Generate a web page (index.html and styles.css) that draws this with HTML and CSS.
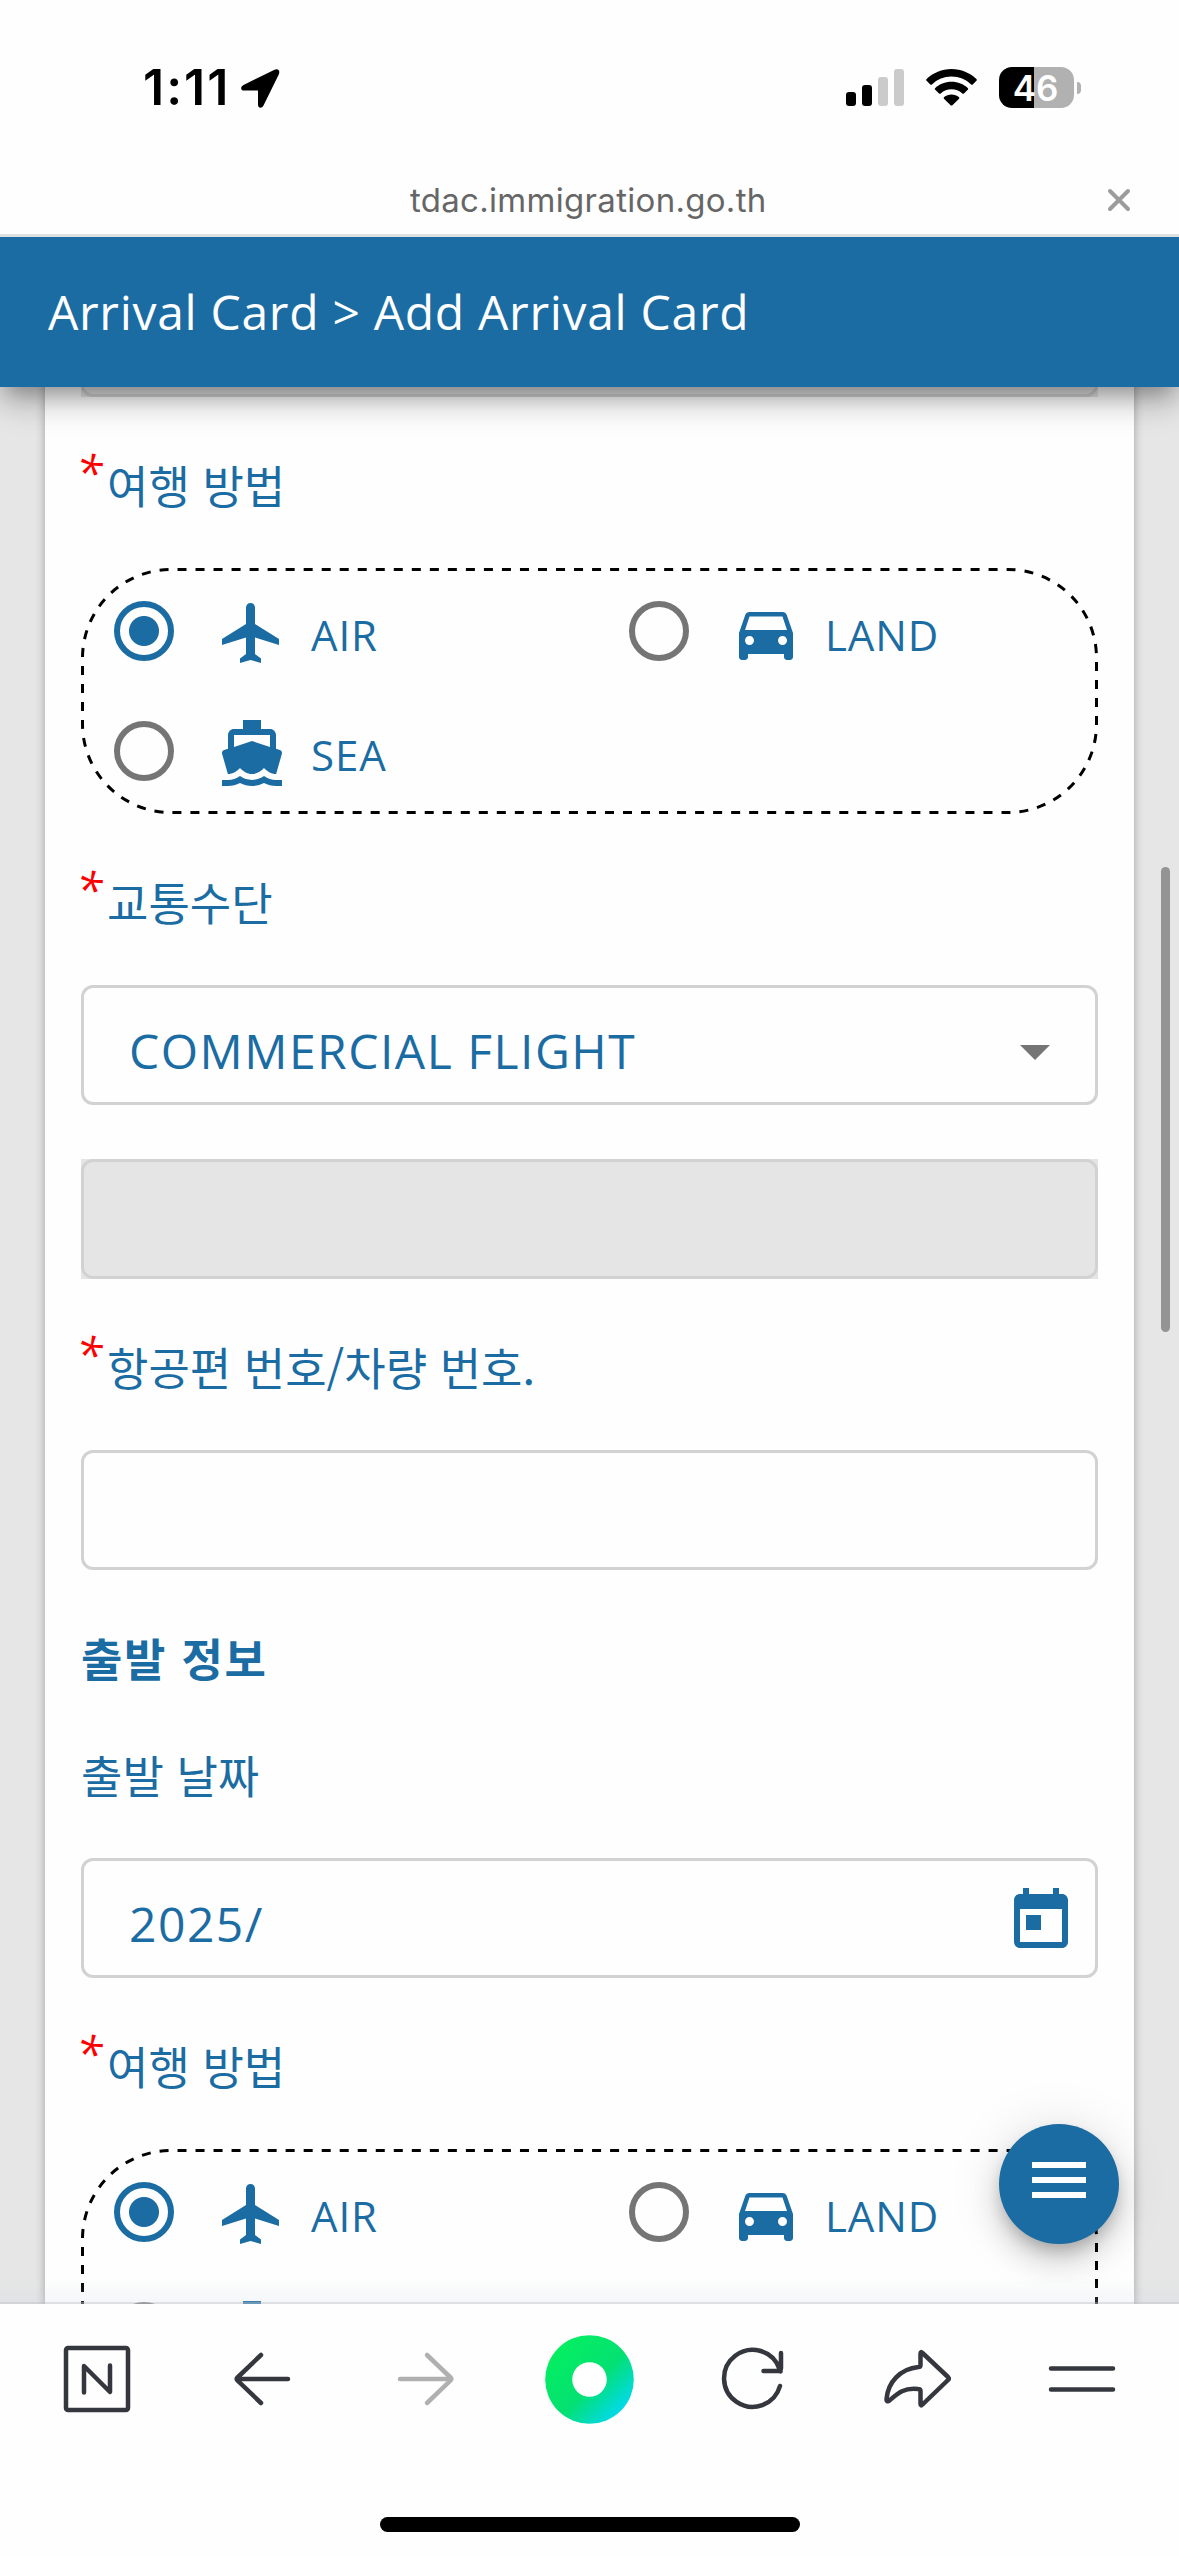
FILE: index.html
```html
<!DOCTYPE html>
<html lang="ko">
<head>
<meta charset="utf-8">
<meta name="viewport" content="width=device-width, initial-scale=1">
<title>Arrival Card</title>
<link rel="stylesheet" href="styles.css">
</head>
<body>
<svg class="defs" width="0" height="0" aria-hidden="true">
  <symbol id="plane" viewBox="0 0 24 24"><path d="M21 16v-2l-8-5V3.500c0-.83-.67-1.500-1.500-1.500S10 2.670 10 3.500V9l-8 5v2l8-2.500V19l-2 1.500V22l3.500-1 3.500 1v-1.500L13 19v-5.500l8 2.500z"/></symbol>
  <symbol id="car" viewBox="0 0 24 24"><path d="M18.920 6.010C18.720 5.420 18.160 5 17.500 5h-11c-.66 0-1.210.42-1.420 1.010L3 12v8c0 .55.45 1 1 1h1c.55 0 1-.45 1-1v-1h12v1c0 .55.45 1 1 1h1c.55 0 1-.45 1-1v-8l-2.080-5.990zM6.500 16c-.83 0-1.500-.67-1.500-1.500S5.670 13 6.500 13s1.500.67 1.500 1.500S7.330 16 6.500 16zm11 0c-.83 0-1.500-.67-1.500-1.500s.67-1.500 1.500-1.500 1.500.67 1.500 1.500-.67 1.500-1.500 1.500zM5 11l1.500-4.500h11L19 11H5z"/></symbol>
  <symbol id="boat" viewBox="0 0 24 24"><path d="M20 21c-1.390 0-2.780-.47-4-1.320-2.440 1.710-5.560 1.710-8 0C6.780 20.530 5.390 21 4 21H2v2h2c1.380 0 2.740-.35 4-.99 2.520 1.290 5.480 1.290 8 0 1.260.65 2.620.99 4 .99h2v-2h-2zM3.950 19H4c1.600 0 3.020-.88 4-2 .98 1.120 2.400 2 4 2s3.020-.88 4-2c.98 1.120 2.400 2 4 2h.05l1.890-6.680c.08-.26.06-.54-.06-.78s-.34-.42-.6-.5L20 10.620V6c0-1.100-.9-2-2-2h-3V1H9v3H6c-1.100 0-2 .9-2 2v4.620l-1.290.42c-.26.08-.48.26-.6.5s-.15.52-.06.78L3.950 19zM6 6h12v3.970L12 8 6 9.970V6z"/></symbol>
  <symbol id="today" viewBox="0 0 24 24"><path d="M19 3h-1V1h-2v2H8V1H6v2H5c-1.110 0-1.990.9-1.990 2L3 19c0 1.100.89 2 2 2h14c1.100 0 2-.9 2-2V5c0-1.100-.9-2-2-2zm0 16H5V8h14v11zM7 10h5v5H7z"/></symbol>
  <symbol id="dashes" viewBox="0 0 1017 246"><path fill="none" stroke="#000" stroke-width="3" stroke-dasharray="9 9" d="M96.500 1.500H927A88.500 88.500 0 0 1 1015.500 90V156A88.500 88.500 0 0 1 927 244.500H90A88.500 88.500 0 0 1 1.500 156V90A88.500 88.500 0 0 1 90 1.500H96.500" pathLength="2358"/></symbol>
</svg>

<header class="status">
  <div class="status-left">
    <span class="time">1:11</span>
    <svg class="location" viewBox="0 0 39 39"><path d="M37.500 1C36.500 0 34.500.3 33 1L2.500 16C-.8 17.700-.5 21.500 3 21.500H17V35.500C17 39.500 20.800 39.800 22.500 36.500L37.500 6C38.500 4 38.700 2.200 37.500 1z"/></svg>
  </div>
  <div class="status-right">
    <svg class="signal" viewBox="0 0 58 37"><rect y="23" width="10" height="14" rx="3"/><rect x="16" y="16" width="10" height="21" rx="3"/><g fill="#cbcbcb"><rect x="32" y="8" width="10" height="29" rx="3"/><rect x="48" width="10" height="37" rx="3"/></g></svg>
    <svg class="wifi" viewBox="0 0 51 37"><path d="M25.500 0C15.800 0 7 3.800.6 10.100a1.200 1.200 0 0 0 0 1.700l3.600 3.600c.5.500 1.200.5 1.700 0A28 28 0 0 1 25.500 7.500c7.600 0 14.500 3 19.600 7.900.5.500 1.200.5 1.700 0l3.600-3.600a1.200 1.200 0 0 0 0-1.700C44 3.800 35.200 0 25.500 0zM25.500 12.800c-6.400 0-12.200 2.400-16.200 6.200a1.200 1.200 0 0 0 0 1.800l3.700 3.600c.5.500 1.200.5 1.700 0a16.300 16.300 0 0 1 21.600 0c.5.500 1.200.5 1.700 0l3.700-3.600a1.200 1.200 0 0 0 0-1.800c-4-3.800-9.800-6.200-16.200-6.200zM25.500 25.500c-2.800 0-5.400 1-7.300 2.600a1.200 1.200 0 0 0 0 1.800l6.400 6.300c.5.500 1.300.5 1.800 0l6.400-6.300a1.200 1.200 0 0 0 0-1.800c-1.900-1.600-4.500-2.600-7.300-2.600z"/></svg>
    <div class="battery"><span>46</span></div>
    <i class="nub"></i>
  </div>
</header>

<div class="address">
  <span class="url">tdac.immigration.go.th</span>
  <svg class="close" viewBox="0 0 24 24"><path d="M3 3L21 21M21 3L3 21"/></svg>
</div>

<div class="appbar"><span>Arrival Card &gt; Add Arrival Card</span></div>

<main class="viewport">
  <section class="card">
    <div class="field disabled first"><div class="outline"></div></div>

    <div class="label"><b class="req">*</b>여행 방법</div>
    <div class="modes">
      <svg class="frame"><use href="#dashes"/></svg>
      <div class="mode"><i class="radio on"></i><svg class="icon"><use href="#plane"/></svg><span>AIR</span></div>
      <div class="mode"><i class="radio"></i><svg class="icon"><use href="#car"/></svg><span>LAND</span></div>
      <div class="mode"><i class="radio"></i><svg class="icon"><use href="#boat"/></svg><span>SEA</span></div>
    </div>

    <div class="label"><b class="req">*</b>교통수단</div>
    <div class="field"><span>COMMERCIAL FLIGHT</span><i class="caret"></i></div>
    <div class="field disabled spaced"><div class="outline"></div></div>

    <div class="label"><b class="req">*</b>항공편 번호/차량 번호.</div>
    <div class="field"></div>

    <h2 class="heading">출발 정보</h2>
    <div class="label">출발 날짜</div>
    <div class="field"><span>2025/</span><svg class="icon today"><use href="#today"/></svg></div>

    <div class="label"><b class="req">*</b>여행 방법</div>
    <div class="modes">
      <svg class="frame"><use href="#dashes"/></svg>
      <div class="mode"><i class="radio on"></i><svg class="icon"><use href="#plane"/></svg><span>AIR</span></div>
      <div class="mode"><i class="radio"></i><svg class="icon"><use href="#car"/></svg><span>LAND</span></div>
      <div class="mode"><i class="radio"></i><svg class="icon"><use href="#boat"/></svg></div>
    </div>
  </section>
  <i class="scrollbar"></i>
  <div class="fab"><svg viewBox="0 0 54 36"><path d="M0 0H54V6H0zM0 15H54V21H0zM0 30H54V36H0z"/></svg></div>
</main>

<nav class="toolbar">
  <div class="tools">
    <svg viewBox="0 0 90 90"><rect x="14" y="14" width="62" height="62" rx="2"/><path d="M32 58.500V32L58 58V31.500"/></svg>
    <svg viewBox="0 0 90 90"><path d="M72 45H21M45 21L21.500 43.500Q20 45 21.500 46.500L45 69"/></svg>
    <svg class="dim" viewBox="0 0 90 90"><path d="M20 45H71M47 21L70.500 43.500Q72 45 70.500 46.500L47 69"/></svg>
    <svg class="home" viewBox="0 0 90 90"><defs><linearGradient id="g" x1=".1" y1=".1" x2=".87" y2=".87"><stop offset="0" stop-color="#04f05f"/><stop offset=".58" stop-color="#04e072"/><stop offset="1" stop-color="#00d9f0"/></linearGradient></defs><circle cx="45.500" cy="45.500" r="44.300" fill="url(#g)"/><circle cx="45.500" cy="45.500" r="17.300" fill="#fff"/></svg>
    <svg viewBox="0 0 90 90"><path d="M71 52A28.500 28.500 0 1 1 70.500 35L71.500 37.500M72 19V34Q72 37 69 37H54.500"/></svg>
    <svg viewBox="0 0 90 90"><path d="M47.500 19.500Q47.500 17 49.500 19L75 43Q76.500 44.500 75 46L49.500 70.500Q47.500 72.500 47.500 70V57Q47.500 55 45 55C31 53.500 25 59 17 66Q13.500 69 13.500 65C15 48 27 35 45.500 33Q47.500 33 47.500 31z"/></svg>
    <svg viewBox="0 0 90 90"><path d="M14 34.500H76M14 55.500H76"/></svg>
  </div>
  <i class="indicator"></i>
</nav>
</body>
</html>
```
FILE: styles.css
```css
* { box-sizing: border-box; }
html, body { margin: 0; padding: 0; }
body {
  width: 1179px;
  height: 2556px;
  overflow: hidden;
  display: flex;
  flex-direction: column;
  background: #fefefe;
  color: #1b6ca3;
  font-family: "Open Sans", "Noto Sans CJK KR", sans-serif;
  font-size: 48px;
}
svg { display: block; flex: none; }
i, b { font-style: normal; font-weight: 400; }
.defs { position: absolute; }

.status {
  height: 162px;
  flex: none;
  display: flex;
  justify-content: space-between;
  align-items: flex-start;
  padding: 67px 97px 0 143px;
  color: #000;
  font-family: Inter, "Liberation Sans", sans-serif;
}
.status-left, .status-right { display: flex; align-items: center; height: 41px; }
.time { width: 98px; font-size: 50px; font-weight: 600; line-height: 41px; letter-spacing: 2px; white-space: nowrap; }
.location { width: 39px; height: 39px; margin-top: 2px; }
.signal { width: 58px; height: 37px; margin-right: 22px; }
.wifi { width: 51px; height: 37px; margin-right: 22px; }
.battery {
  width: 75px;
  height: 41px;
  padding-right: 2px;
  border-radius: 13px;
  background: linear-gradient(90deg, #000 35px, #b1b1b1 35px);
  color: #fff;
  font-size: 35px;
  font-weight: 600;
  line-height: 42px;
  text-align: center;
}
.nub { width: 4px; height: 12px; margin: 0 1px 0 3px; background: #b1b1b1; border-radius: 0 5px 5px 0; }

.address {
  position: relative;
  z-index: 3;
  height: 75px;
  flex: none;
  display: flex;
  align-items: flex-start;
  padding: 18px 48px 0 410px;
  justify-content: space-between;
  border-bottom: 3px solid #dfe1e1;
  background: #fefefe;
  color: #666;
  font-family: Inter, "Liberation Sans", sans-serif;
  font-size: 33px;
  line-height: 40px;
  letter-spacing: .300px;
}
.url { white-space: nowrap; }
.close { width: 24px; height: 24px; margin-top: 8px; fill: none; stroke: #9c9c9c; stroke-width: 4; stroke-linecap: round; }

.appbar {
  position: relative;
  z-index: 2;
  height: 150px;
  flex: none;
  display: flex;
  align-items: center;
  padding: 0 0 2px 48px;
  background: #1b6ca3;
  color: #fff;
  letter-spacing: .700px;
  box-shadow: 0 15px 18px -9px rgba(0, 0, 0, .2), 0 12px 30px rgba(0, 0, 0, .2), 0 9px 42px rgba(0, 0, 0, .14);
}

.viewport { position: relative; height: 1917px; flex: none; overflow: hidden; background: #e6e6e6; padding: 0 45px; }
.viewport::after {
  content: "";
  position: absolute;
  inset: auto 0 0;
  height: 24px;
  background: linear-gradient(rgba(200, 210, 220, 0), rgba(200, 210, 220, .18));
  border-bottom: 2px solid rgba(190, 195, 200, .5);
}
.card { height: 2200px; padding: 0 36px; background: #fefefe; box-shadow: 0 0 9px rgba(0, 0, 0, .3); }

.field {
  height: 120px;
  display: flex;
  align-items: center;
  justify-content: space-between;
  padding: 10px 45px 0 45px;
  border: 3px solid #d2d2d2;
  border-radius: 12px;
  letter-spacing: 1.500px;
}
.field.disabled { padding: 0; border: 0; border-radius: 0; background: #e5e5e5; }
.outline { flex: 1; height: 120px; border: 3px solid #d2d2d2; border-radius: 12px; }
.first { margin-top: -110px; }
.spaced { margin-top: 54px; }
.caret { margin-top: 4px; border: 15px solid transparent; border-top-color: #757575; border-bottom: 0; }

.label, .heading { display: flex; margin: 0; font-size: 45px; line-height: 60px; font-weight: 400; white-space: pre; font-family: "Noto Sans CJK KR", sans-serif; }
.label { height: 171px; padding-top: 58px; }
.heading { height: 117px; padding-top: 58px; font-weight: 700; letter-spacing: 1.700px; }
.req { width: 26px; margin-top: -13px; color: #f00; font-family: "Open Sans", sans-serif; font-size: 48px; font-style: italic; font-weight: 500; text-indent: -5px; }

.modes {
  position: relative;
  height: 246px;
  display: grid;
  grid-template-columns: 515px 1fr;
  grid-auto-rows: 120px;
  padding-left: 33px;
  font-size: 42px;
}
.frame { position: absolute; inset: 0; width: 1017px; height: 246px; }
.mode { display: flex; align-items: flex-start; padding-top: 33px; }
.radio { width: 60px; height: 60px; border: 6px solid #757575; border-radius: 50%; }
.radio.on { border-color: #1b6ca3; background: radial-gradient(circle, #1b6ca3 14.500px, transparent 15.500px); }
.icon { width: 72px; height: 72px; fill: #1b6ca3; }
.mode .icon { margin: -4px 23px 0 42px; }
.mode:nth-of-type(2) .icon { margin-left: 41px; }
.mode span { line-height: 60px; margin-top: 4px; letter-spacing: .900px; }
.field .today { margin: -5px -27px 0 0; }

.scrollbar { position: absolute; left: 1161px; top: 480px; width: 9px; height: 465px; border-radius: 5px; background: #949494; }
.fab {
  position: absolute;
  left: 999px;
  top: 1737px;
  width: 120px;
  height: 120px;
  display: flex;
  justify-content: center;
  padding-top: 38px;
  border-radius: 50%;
  background: #1b6ca3;
  box-shadow: 0 9px 15px -3px rgba(0, 0, 0, .2), 0 18px 30px rgba(0, 0, 0, .14), 0 3px 54px rgba(0, 0, 0, .12);
}
.fab svg { width: 54px; height: 36px; fill: #fff; }

.toolbar { height: 252px; flex: none; display: flex; flex-direction: column; align-items: center; background: #fefefe; }
.tools { width: 100%; display: flex; justify-content: space-between; padding: 30px 52px 0; }
.tools svg { width: 90px; height: 90px; fill: none; stroke: #34373d; stroke-width: 4.500; stroke-linecap: round; stroke-linejoin: round; }
.tools .dim { stroke: #b0b0b1; }
.tools .home { stroke: none; }
.indicator { width: 420px; height: 15px; margin-top: 93px; border-radius: 8px; background: #000; }
```
